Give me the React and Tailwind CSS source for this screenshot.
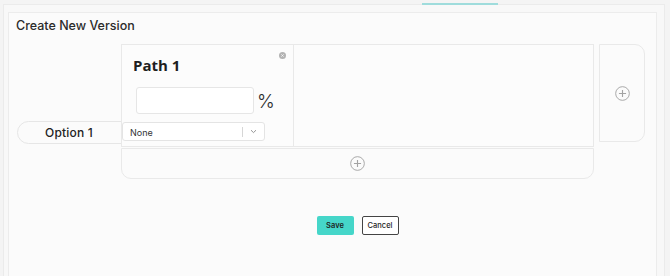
const PlusCircle = ({ size = 15 }) => (
  <svg width={size} height={size} viewBox="0 0 16 16" fill="none" stroke="#a3a3a3" strokeWidth="1">
    <circle cx="8" cy="8" r="7.3" />
    <path d="M8 4.2v7.6M4.2 8h7.6" strokeWidth="1.2" />
  </svg>
);

const App = () => {
  return (
    <div className="h-[276px] w-[670px] overflow-hidden bg-[#f4f4f4] pt-[4px] pl-[3px] pr-[5px]" style={{ fontFamily: "Inter, 'Noto Sans', sans-serif" }}>
      <div className="relative h-[300px] border border-[#ebebeb] bg-[#f8f8f8] pl-[4px] pr-[7px] pt-[7px]">
        <div className="absolute -top-[2px] left-[418px] h-[2px] w-[76px] bg-[#9fdcdc]" />
        <div className="h-full border border-[#ececec] bg-[#fbfbfb]">
          <div className="pl-[7px] pt-[5px] text-[12.5px] font-medium leading-[16px] text-[#2b2b2b]">
            Create New Version
          </div>

          <div className="mt-[10px] flex items-start">
            <div className="w-[112px] shrink-0 pl-[8px] pt-[77px]">
              <div className="flex h-[23px] w-[110px] items-center justify-center rounded-l-full border border-[#e6e6e6] bg-[#fbfbfb] pr-[6px] text-[12px] font-medium tracking-[0.2px] text-[#222]">
                Option 1
              </div>
            </div>

            <div className="relative z-10 flex w-[473px] shrink-0 flex-col">
              <div className="flex h-[103px] border border-[#e9e9e9] bg-[#fcfcfc]">
                <div className="relative w-[172px] shrink-0 border-r border-[#e9e9e9]">
                  <div className="absolute right-[7px] top-[7px] flex h-[7px] w-[7px] items-center justify-center rounded-full bg-[#b3b3b3]">
                    <svg width="3" height="3" viewBox="0 0 3 3" stroke="#fff" strokeWidth="0.7">
                      <path d="M0.3 0.3l2.4 2.4M2.7 0.3L0.3 2.7" />
                    </svg>
                  </div>
                  <div className="pl-[11px] pt-[11px] text-[15px] font-bold leading-[18px] text-[#1e1e1e]" style={{ fontFamily: "'Open Sans', sans-serif" }}>
                    Path 1
                  </div>
                  <div className="mt-[13px] flex items-center pl-[14px]">
                    <div className="h-[27px] w-[118px] rounded-[3px] border border-[#e6e6e6] bg-white" />
                    <span className="ml-[3px] mt-[2px] text-[19px] font-light leading-none text-[#2a2a2a]">%</span>
                  </div>
                  <div className="mt-[8px] flex h-[19px] w-[143px] items-center rounded-[3px] border border-[#e4e4e4] bg-white">
                    <span className="flex-1 pl-[7px] pt-[2px] text-[9px] text-[#333]">None</span>
                    <span className="h-[10px] w-px bg-[#d6d6d6]" />
                    <svg className="mx-[7px]" width="7" height="5" viewBox="0 0 7 5" fill="none" stroke="#888" strokeWidth="0.9">
                      <path d="M1 1.2l2.5 2.4L6 1.2" />
                    </svg>
                  </div>
                </div>
                <div className="flex-1" />
              </div>
              <div className="mt-[1px] flex h-[31px] items-center justify-center rounded-b-[10px] border border-[#e9e9e9] bg-[#fbfbfb]">
                <PlusCircle size={15} />
              </div>

              <div className="mt-[37px] flex justify-center gap-[8px]">
                <button className="h-[19px] w-[37px] rounded-[2px] bg-[#45d6c9] text-[7.5px] font-semibold text-[#1e1e1e]">
                  Save
                </button>
                <button className="h-[19px] w-[37px] rounded-[2px] border-[1.5px] border-[#444] bg-white text-[7.5px] font-medium text-[#1e1e1e]">
                  Cancel
                </button>
              </div>
            </div>

            <div className="ml-[5px] flex h-[98px] w-[46px] shrink-0 items-center justify-center rounded-r-[10px] border border-[#e9e9e9] bg-[#fbfbfb]">
              <PlusCircle size={15} />
            </div>
          </div>
        </div>
      </div>
    </div>
  );
};

export default App;
